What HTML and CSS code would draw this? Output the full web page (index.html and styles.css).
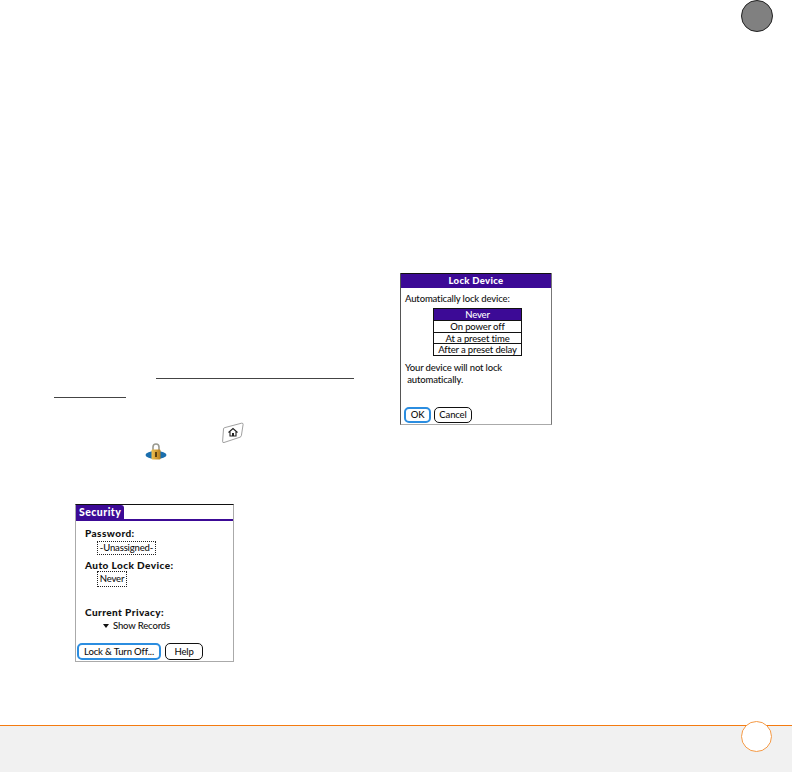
FILE: index.html
```html
<!DOCTYPE html>
<html lang="en">
<head>
<meta charset="utf-8">
<title>Lock Device</title>
<link rel="stylesheet" href="styles.css">
</head>
<body>
<div class="page">
  <div class="tab-dot"></div>
  <div class="rule rule-a"></div>
  <div class="rule rule-b"></div>
  <svg class="home-key" width="24" height="22" viewBox="0 0 24 22">
    <path d="M2.5 7 Q2.5 6 3.5 5.7 L20.5 1.2 Q22.3 0.9 22.1 2.5 L20.4 13.5 Q20.2 14.8 19 15.2 L3 20.5 Q1.5 20.9 1.6 19.3 Z" fill="#fff" stroke="#777" stroke-width="0.7"/>
    <path d="M7.5 10.5 L12 6.5 L16.5 10.5 M9 9.5 V14 H15 V9.5" fill="none" stroke="#222" stroke-width="1.1"/>
    <rect x="11" y="11" width="2" height="3" fill="#222"/>
  </svg>
  <svg class="lock-icon" width="22" height="17" viewBox="0 0 22 17">
    <defs>
      <linearGradient id="gold" x1="0" x2="1" y1="0" y2="0">
        <stop offset="0" stop-color="#f0c050"/>
        <stop offset="1" stop-color="#b97f1e"/>
      </linearGradient>
    </defs>
    <ellipse cx="11" cy="12" rx="10.5" ry="4" fill="#1b6fae"/>
    <path d="M8 7 V4 A3 3 0 0 1 14 4 V7" fill="none" stroke="#9a9a90" stroke-width="1.6"/>
    <rect x="6.5" y="6.5" width="9" height="10" rx="1" fill="url(#gold)"/>
    <rect x="10.2" y="9" width="1.6" height="5" fill="#3d2a08"/>
  </svg>

  <section class="shot security">
    <div class="sec-head"><span class="sec-tab">Security</span></div>
    <div class="sec-body">
      <div class="label">Password:</div>
      <div class="dotted dotted-wide">-Unassigned-</div>
      <div class="label">Auto Lock Device:</div>
      <div class="dotted dotted-never">Never</div>
      <div class="label label-privacy">Current Privacy:</div>
      <div class="picker"><span class="arrow"></span>Show Records</div>
    </div>
    <div class="btns">
      <span class="btn btn-focus btn-lock">Lock &amp; Turn Off...</span>
      <span class="btn btn-help">Help</span>
    </div>
  </section>

  <section class="shot lockdev">
    <div class="dlg-title">Lock Device</div>
    <div class="dlg-body">
      <div class="dlg-line">Automatically lock device:</div>
      <div class="list">
        <div class="item item-on">Never</div>
        <div class="item">On power off</div>
        <div class="item">At a preset time</div>
        <div class="item">After a preset delay</div>
      </div>
      <div class="dlg-msg">Your device will not lock<br>&nbsp;automatically.</div>
    </div>
    <div class="btns btns-dlg">
      <span class="btn btn-focus btn-ok">OK</span>
      <span class="btn btn-cancel">Cancel</span>
    </div>
  </section>

  <footer class="foot"><div class="foot-dot"></div></footer>
</div>
</body>
</html>
```
FILE: styles.css
```css
html, body { margin: 0; padding: 0; background: #fff; }
.page { position: relative; width: 792px; height: 772px; overflow: hidden; font-family: "Lato", "Liberation Sans", sans-serif; color: #111; }
.tab-dot { position: absolute; left: 741px; top: 0; width: 32px; height: 32px; box-sizing: border-box; border-radius: 50%; background: #808080; border: 1.5px solid #222; }
.rule { position: absolute; height: 1px; background: #444; }
.rule-a { left: 156px; top: 378px; width: 198px; }
.rule-b { left: 54px; top: 397px; width: 72px; }
.home-key { position: absolute; left: 221px; top: 422px; }
.lock-icon { position: absolute; left: 145px; top: 443px; }

.shot { position: absolute; box-sizing: border-box; background: #fff; font-size: 9.5px; font-weight: 500; letter-spacing: -.15px; }
.security { left: 75px; top: 504px; width: 159px; height: 158px; border: 1px solid #aaa; border-top: 1px solid #111; }
.sec-head { height: 14px; border-bottom: 2px solid #3c0a96; }
.sec-tab { display: inline-block; height: 15px; line-height: 15px; padding: 0 3px; background: #3c0a96; color: #fff; font-weight: 900; font-size: 10.5px; letter-spacing: .45px; border-radius: 0 3px 0 0; }
.sec-body { padding: 6px 0 0 9px; }
.label { font-weight: 900; font-size: 10px; line-height: 12px; letter-spacing: .42px; }
.dotted { box-sizing: border-box; width: 30px; margin-left: 12px; border: 1px dotted #222; text-align: center; }
.dotted-wide { width: 59px; height: 14px; line-height: 12px; margin-top: 2px; margin-bottom: 4px; }
.dotted-never { height: 16px; line-height: 14px; }
.label-privacy { margin-top: 19px; }
.picker { margin: 1px 0 0 18px; height: 13px; line-height: 13px; display: flex; align-items: center; gap: 4px; }
.arrow { width: 0; height: 0; border: 3.5px solid transparent; border-top: 4px solid #111; border-bottom: 0; }
.btns { position: absolute; left: 1px; bottom: 1px; display: flex; gap: 4px; }
.btn { box-sizing: border-box; display: block; height: 17px; line-height: 15px; border: 1px solid #111; border-radius: 5px; text-align: center; background: #fff; }
.btn-focus { border: 2px solid #2b8de0; line-height: 13px; }
.btn-lock { width: 84px; }
.btn-help { width: 38px; }

.lockdev { left: 400px; top: 273px; width: 152px; height: 152px; border-left: 1px solid #555; border-right: 1px solid #777; border-bottom: 1px solid #aaa; }
.dlg-title { height: 15px; box-sizing: border-box; line-height: 14px; background: #3c0a96; color: #fff; font-weight: 900; font-size: 9.5px; text-align: center; border-top: 1px solid #111; letter-spacing: .3px; }
.dlg-body { padding: 4px 0 0 4px; }
.dlg-line { line-height: 13px; }
.list { box-sizing: border-box; width: 89px; margin: 3px 0 0 28px; border: 1px solid #111; }
.item { height: 10.75px; line-height: 11px; text-align: center; border-top: 1px solid #111; }
.item:first-child { border-top: 0; }
.item-on { background: #3c0a96; color: #fff; }
.dlg-msg { margin-top: 6px; line-height: 12px; }
.btns-dlg { left: 3px; bottom: 1px; gap: 3px; }
.btns-dlg .btn { height: 16px; line-height: 14px; }
.btns-dlg .btn-focus { line-height: 12px; }
.btn-ok { width: 27px; }
.btn-cancel { width: 38px; }

.foot { position: absolute; left: 0; top: 725px; width: 792px; height: 47px; background: #f1f1f1; border-top: 1px solid #f47b10; box-sizing: border-box; }
.foot-dot { position: absolute; left: 741px; top: -5px; width: 31px; height: 31px; box-sizing: border-box; border-radius: 50%; background: #fff; border: 1.5px solid #f59a45; }
```
